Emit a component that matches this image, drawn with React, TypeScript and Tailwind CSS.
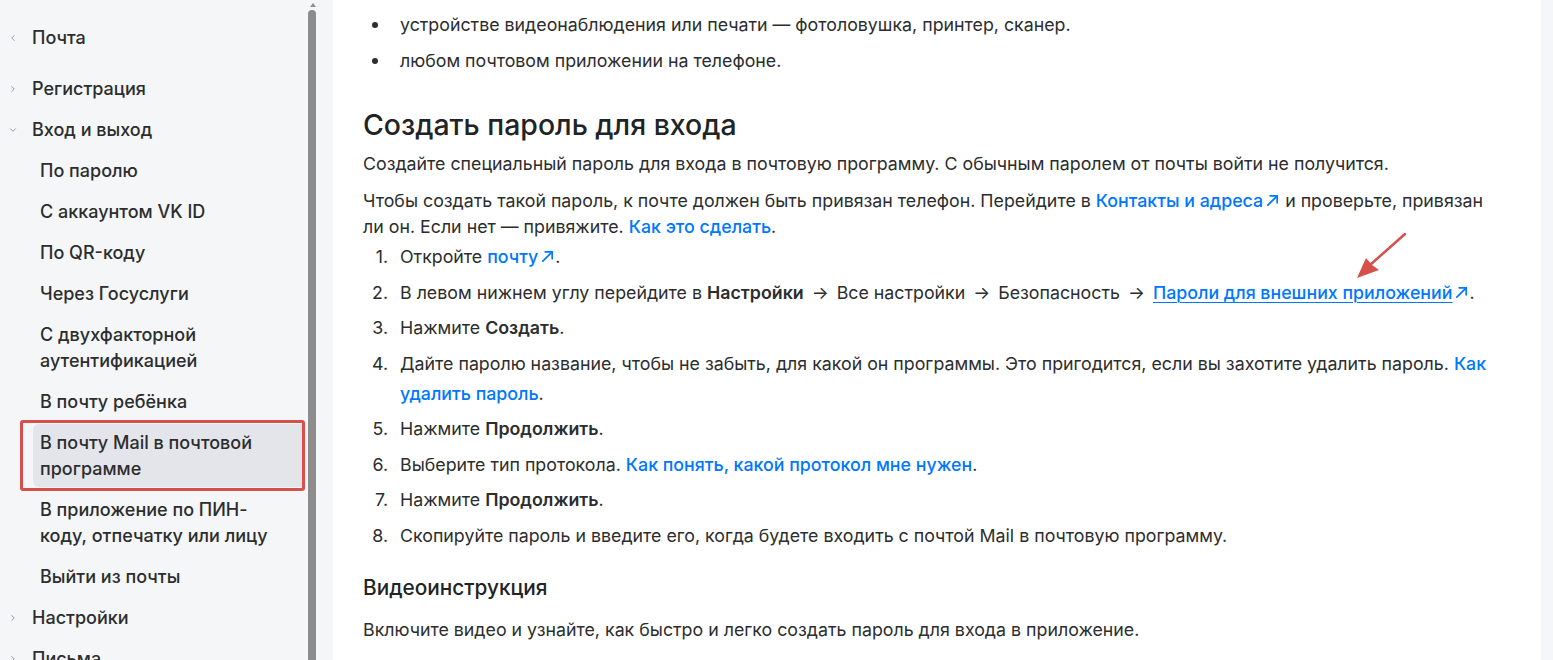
import React from "react";
import { ChevronLeft, ChevronRight, ChevronDown } from "lucide-react";

const font = { fontFamily: "Inter, 'Noto Sans', sans-serif" };

function Ext() {
  return (
    <svg viewBox="0 0 16 16" className="inline-block w-[15px] h-[15px] ml-[2px] -mt-[3px] align-middle" fill="none" stroke="currentColor" strokeWidth="1.8" strokeLinecap="round" strokeLinejoin="round">
      <path d="M3 13 L13 3" />
      <path d="M5.5 3 H13 V10.5" />
    </svg>
  );
}

function A({ children, ext, underline }: { children: React.ReactNode; ext?: boolean; underline?: boolean }) {
  return (
    <a className={`text-[#0077ff] font-medium ${underline ? "underline underline-offset-[3px] decoration-1" : ""}`}>
      {children}
      {ext && <Ext />}
    </a>
  );
}

function Arrow() {
  return <span className="mx-[3px]">→</span>;
}

type NavItem = { label: string; level: 0 | 1; chevron?: "left" | "right" | "down"; active?: boolean; first?: boolean };

const nav: NavItem[] = [
  { label: "Почта", level: 0, chevron: "left", first: true },
  { label: "Регистрация", level: 0, chevron: "right" },
  { label: "Вход и выход", level: 0, chevron: "down" },
  { label: "По паролю", level: 1 },
  { label: "С аккаунтом VK ID", level: 1 },
  { label: "По QR-коду", level: 1 },
  { label: "Через Госуслуги", level: 1 },
  { label: "С двухфакторной аутентификацией", level: 1 },
  { label: "В почту ребёнка", level: 1 },
  { label: "В почту Mail в почтовой программе", level: 1, active: true },
  { label: "В приложение по ПИН-коду, отпечатку или лицу", level: 1 },
  { label: "Выйти из почты", level: 1 },
  { label: "Настройки", level: 0, chevron: "right" },
  { label: "Письма", level: 0, chevron: "right" },
];

function Sidebar() {
  return (
    <aside className="w-[333px] shrink-0 bg-[#f5f6f8] flex h-full">
      <nav className="w-[305px] shrink-0 pt-[17px] text-[18px] leading-[26px] text-[#2c2d2e]">
        {nav.map((item) => {
          const Icon = item.chevron === "left" ? ChevronLeft : item.chevron === "down" ? ChevronDown : ChevronRight;
          if (item.level === 0) {
            return (
              <div key={item.label} className={`flex items-center py-[7.5px] ${item.first ? "mb-[10px]" : ""}`}>
                <span className="w-[32px] flex justify-center">
                  <Icon size={10} strokeWidth={2} className="text-[#818c99] -ml-[6px]" />
                </span>
                <span className="font-medium">{item.label}</span>
              </div>
            );
          }
          if (item.active) {
            return (
              <div key={item.label} className="relative py-[2px]">
                <div className="ml-[33px] bg-[#e4e5ea] rounded-l-[6px] pl-[7px] pr-[20px] py-[5.5px] font-medium">
                  {item.label}
                </div>
                <div className="absolute left-[20px] right-0 -top-[2px] -bottom-[2px] border-[3px] border-[#d5514b] rounded-[3px]" />
              </div>
            );
          }
          return (
            <div key={item.label} className="pl-[40px] pr-[24px] py-[7.5px] font-medium">
              {item.label}
            </div>
          );
        })}
      </nav>
      <div className="w-[15px] shrink-0 relative">
        <div className="absolute left-[5px] top-[3px] w-0 h-0 border-l-[3px] border-r-[3px] border-b-[4px] border-l-transparent border-r-transparent border-b-[#8f8f8f]" />
        <div className="absolute left-[3px] top-[10px] bottom-0 w-[8px] rounded-t-[4px] bg-[#8c8c8c]" />
      </div>
    </aside>
  );
}

function Num({ n, children }: { n: number; children: React.ReactNode }) {
  return (
    <li className="flex mb-[5.5px]">
      <span className="w-[25px] shrink-0 text-right">{n}.</span>
      <span className="pl-[12px]">{children}</span>
    </li>
  );
}

function Bullet({ children }: { children: React.ReactNode }) {
  return (
    <li className="flex items-start mb-[10px]">
      <span className="w-[37px] shrink-0 h-[26px] flex items-center">
        <span className="ml-[9px] w-[6px] h-[6px] rounded-full bg-[#2c2d2e]" />
      </span>
      <span>{children}</span>
    </li>
  );
}

function Content() {
  return (
    <main className="flex-1 bg-white pl-[30px] pt-[12px] text-[17.8px] leading-[26px] text-[#2c2d2e]">
      <div className="w-[1135px]">
        <ul>
          <Bullet>устройстве видеонаблюдения или печати — фотоловушка, принтер, сканер.</Bullet>
          <Bullet>любом почтовом приложении на телефоне.</Bullet>
        </ul>
        <h2 className="mt-[33px] text-[28.4px] leading-[36px] font-medium text-[#222324]">Создать пароль для входа</h2>
        <p className="mt-[8px]">
          Создайте специальный пароль для входа в почтовую программу. С обычным паролем от почты войти не получится.
        </p>
        <p className="mt-[11px]">
          Чтобы создать такой пароль, к почте должен быть привязан телефон. Перейдите в <A ext>Контакты и адреса</A> и проверьте, привязан ли он. Если нет — привяжите. <A>Как это сделать</A>.
        </p>
        <ol className="mt-[2px] leading-[30px]">
          <Num n={1}>Откройте <A ext>почту</A>.</Num>
          <Num n={2}>
            В левом нижнем углу перейдите в <b className="font-semibold">Настройки</b> <Arrow /> Все настройки <Arrow /> Безопасность <Arrow /> <A ext underline>Пароли для внешних приложений</A>.
          </Num>
          <Num n={3}>Нажмите <b className="font-semibold">Создать</b>.</Num>
          <Num n={4}>
            Дайте паролю название, чтобы не забыть, для какой он программы. Это пригодится, если вы захотите удалить пароль. <A>Как удалить пароль</A>.
          </Num>
          <Num n={5}>Нажмите <b className="font-semibold">Продолжить</b>.</Num>
          <Num n={6}>Выберите тип протокола. <A>Как понять, какой протокол мне нужен</A>.</Num>
          <Num n={7}>Нажмите <b className="font-semibold">Продолжить</b>.</Num>
          <Num n={8}>Скопируйте пароль и введите его, когда будете входить с почтой Mail в почтовую программу.</Num>
        </ol>
        <h3 className="mt-[23px] text-[20.8px] leading-[28px] font-medium text-[#222324]">Видеоинструкция</h3>
        <p className="mt-[15px]">Включите видео и узнайте, как быстро и легко создать пароль для входа в приложение.</p>
      </div>
    </main>
  );
}

export default function App() {
  return (
    <div className="relative flex w-[1553px] h-[660px] overflow-hidden bg-white" style={font}>
      <Sidebar />
      <Content />
      <div className="w-[12px] shrink-0 bg-[#f5f6f8]" />
      <svg className="absolute left-0 top-0 pointer-events-none" width="1553" height="660">
        <line x1="1405" y1="234" x2="1370" y2="265" stroke="#d5514b" strokeWidth="2.5" strokeLinecap="round" />
        <polygon points="1357,278 1379,270 1372,265 1366,258" fill="#d5514b" />
      </svg>
    </div>
  );
}
